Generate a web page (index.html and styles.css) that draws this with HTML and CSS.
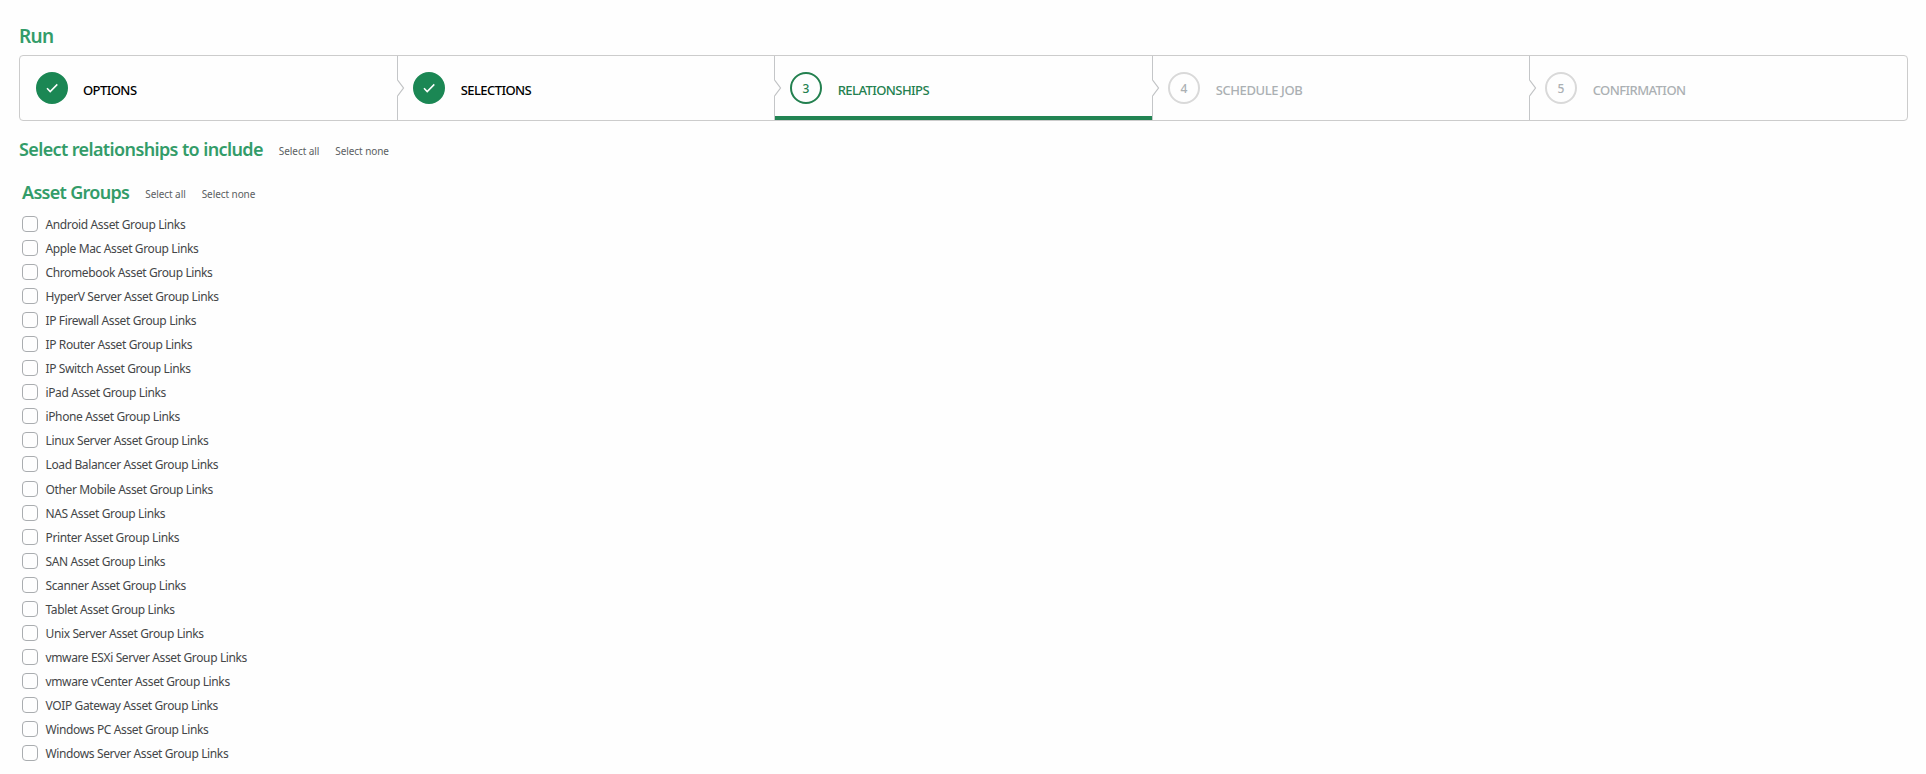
FILE: index.html
```html
<!DOCTYPE html>
<html lang="en">
<head>
  <meta charset="UTF-8">
  <meta name="viewport" content="width=device-width, initial-scale=1.0">
  <title>Run</title>
  <link rel="stylesheet" href="styles.css">
</head>
<body>
  <h1>Run</h1>

  <ol class="steps">
    <li class="step done">
      <span class="step-icon"><svg width="14" height="14" viewBox="0 0 14 14"><path d="M2 7.3L5.2 10.6L12.3 3.4"/></svg></span>
      <span class="step-label">OPTIONS</span>
    </li>
    <li class="step done">
      <svg class="chevron" width="8" height="16" viewBox="0 0 8 16"><path d="M0.5 0L6.5 8L0.5 16"/></svg>
      <span class="step-icon"><svg width="14" height="14" viewBox="0 0 14 14"><path d="M2 7.3L5.2 10.6L12.3 3.4"/></svg></span>
      <span class="step-label">SELECTIONS</span>
    </li>
    <li class="step active">
      <svg class="chevron" width="8" height="16" viewBox="0 0 8 16"><path d="M0.5 0L6.5 8L0.5 16"/></svg>
      <span class="step-icon">3</span>
      <span class="step-label">RELATIONSHIPS</span>
    </li>
    <li class="step">
      <svg class="chevron" width="8" height="16" viewBox="0 0 8 16"><path d="M0.5 0L6.5 8L0.5 16"/></svg>
      <span class="step-icon">4</span>
      <span class="step-label wide">SCHEDULE JOB</span>
    </li>
    <li class="step">
      <svg class="chevron" width="8" height="16" viewBox="0 0 8 16"><path d="M0.5 0L6.5 8L0.5 16"/></svg>
      <span class="step-icon">5</span>
      <span class="step-label">CONFIRMATION</span>
    </li>
  </ol>

  <div class="heading">
    <h2>Select relationships to include</h2>
    <a href="#">Select all</a>
    <a href="#">Select none</a>
  </div>

  <section class="group">
    <div class="heading">
      <h2>Asset Groups</h2>
      <a href="#">Select all</a>
      <a href="#">Select none</a>
    </div>
    <div class="options">
      <label><input type="checkbox">Android Asset Group Links</label>
      <label><input type="checkbox">Apple Mac Asset Group Links</label>
      <label><input type="checkbox">Chromebook Asset Group Links</label>
      <label><input type="checkbox">HyperV Server Asset Group Links</label>
      <label><input type="checkbox">IP Firewall Asset Group Links</label>
      <label><input type="checkbox">IP Router Asset Group Links</label>
      <label><input type="checkbox">IP Switch Asset Group Links</label>
      <label><input type="checkbox">iPad Asset Group Links</label>
      <label><input type="checkbox">iPhone Asset Group Links</label>
      <label><input type="checkbox">Linux Server Asset Group Links</label>
      <label><input type="checkbox">Load Balancer Asset Group Links</label>
      <label><input type="checkbox">Other Mobile Asset Group Links</label>
      <label><input type="checkbox">NAS Asset Group Links</label>
      <label><input type="checkbox">Printer Asset Group Links</label>
      <label><input type="checkbox">SAN Asset Group Links</label>
      <label><input type="checkbox">Scanner Asset Group Links</label>
      <label><input type="checkbox">Tablet Asset Group Links</label>
      <label><input type="checkbox">Unix Server Asset Group Links</label>
      <label><input type="checkbox">vmware ESXi Server Asset Group Links</label>
      <label><input type="checkbox">vmware vCenter Asset Group Links</label>
      <label><input type="checkbox">VOIP Gateway Asset Group Links</label>
      <label><input type="checkbox">Windows PC Asset Group Links</label>
      <label><input type="checkbox">Windows Server Asset Group Links</label>
    </div>
  </section>
</body>
</html>
```
FILE: styles.css
```css
* {
  box-sizing: border-box;
}
body {
  margin: 0;
  padding: 23px 18px 0 19px;
  background-color: #fefefe;
  color: #444648;
  font-family: "Segoe UI", "Noto Sans", sans-serif;
  font-size: 12px;
}
h1, h2 {
  margin: 0;
  color: #339c69;
  font-size: 18px;
  font-weight: 600;
  line-height: 26px;
  letter-spacing: -0.62px;
}
h1 {
  font-size: 19px;
}
.steps {
  display: grid;
  grid-template-columns: 377px 377px 378px 377px 378px;
  width: 1889px;
  height: 66px;
  margin: 6px 0 15px;
  padding: 0;
  border: 1px solid #cccccc;
  border-radius: 4px;
  list-style: none;
}
.step {
  position: relative;
  display: flex;
  align-items: center;
  gap: 15px;
  padding-left: 16px;
  color: #abb0b3;
}
.step + .step {
  gap: 15.7px;
  box-shadow: inset 1px 0 #c4c6c8;
}
.chevron {
  position: absolute;
  left: 0;
  top: 24px;
  background-color: #fefefe;
}
.chevron path {
  fill: none;
  stroke: #c0c2c4;
  stroke-width: 1.2;
}
.step-icon {
  display: flex;
  align-items: center;
  justify-content: center;
  width: 32px;
  height: 32px;
  border: 2px solid #d9d9d9;
  border-radius: 50%;
  font-weight: 500;
}
.step-icon path {
  fill: none;
  stroke: #ffffff;
  stroke-width: 1.5;
}
.step-label {
  padding-top: 4px;
  font-size: 13px;
  font-weight: 500;
  letter-spacing: -0.57px;
}
.step-label.wide {
  letter-spacing: -0.4px;
}
.done {
  color: #000000;
}
.done .step-icon {
  border-color: #1b8754;
  background-color: #1b8754;
}
.active {
  color: #23804f;
}
.active .step-icon {
  border-color: #23804f;
}
.active::after {
  content: "";
  position: absolute;
  left: 1px;
  right: 0;
  bottom: 0;
  height: 4px;
  background-color: #228453;
}
.heading {
  display: flex;
  gap: 16px;
  height: 26px;
}
.heading a {
  color: #5b5f62;
  font-size: 10px;
  line-height: 30px;
  letter-spacing: -0.07px;
  text-decoration: none;
}
.group {
  margin: 17px 0 0 3px;
}
.group h2 {
  letter-spacing: -0.7px;
}
.options {
  margin-top: 7px;
}
.options label {
  display: flex;
  align-items: center;
  gap: 7.5px;
  height: 24px;
  letter-spacing: -0.37px;
}
.options label:nth-child(12) {
  margin-top: 1px;
}
.options input {
  appearance: none;
  width: 16px;
  height: 16px;
  margin: 0;
  border: 1px solid #aaadb0;
  border-radius: 4px;
}
```
